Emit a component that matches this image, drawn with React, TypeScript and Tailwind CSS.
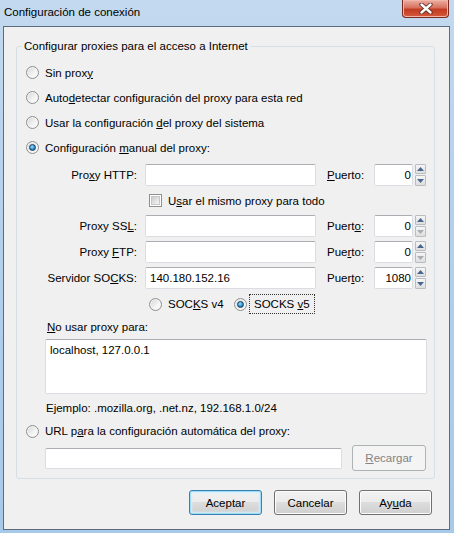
import React from "react";

const font = "font-['Liberation_Sans',Arial,sans-serif] text-[11.5px] leading-[16px] text-black";

const Radio = ({ checked }: { checked?: boolean }) => (
  <span className="flex h-[13px] w-[13px] shrink-0 items-center justify-center rounded-full border border-[#8e8f8f] bg-[linear-gradient(135deg,#d4d4d4,#f4f4f4_60%,#ffffff)] shadow-[inset_0_0_0_1px_#f4f4f4]">
    {checked && (
      <span className="h-[7px] w-[7px] rounded-full border border-[#1b3c5a] bg-[radial-gradient(circle_at_40%_35%,#9be3ff,#2c8fd0_55%,#0d4a7c)]" />
    )}
  </span>
);

const Check = () => (
  <span className="flex h-[13px] w-[13px] shrink-0 items-center justify-center border border-[#8e8f8f] bg-white">
    <span className="h-[9px] w-[9px] border border-[#c6c6c6] bg-[linear-gradient(135deg,#cbcbcb,#f6f6f6)]" />
  </span>
);

const Arrow = ({ up, off }: { up?: boolean; off?: boolean }) => (
  <svg width="7" height="4" viewBox="0 0 7 4">
    <path d={up ? "M0 4 L3.5 0 L7 4 Z" : "M0 0 L3.5 4 L7 0 Z"} fill={off ? "#a8acb3" : "#4a6592"} />
  </svg>
);

const Spin = ({ value, downOff }: { value: string; downOff?: boolean }) => (
  <div className="flex items-center">
    <div className="flex h-[22px] w-[39px] items-center justify-end rounded-[2px] border border-[#dadde2] border-t-[#abadb3] bg-white pr-[1px]">
      {value}
    </div>
    <div className="ml-[2px] flex h-[22px] w-[11px] flex-col gap-[1px]">
      <div className="flex h-[10px] items-center justify-center rounded-[1px] border border-[#b9bcc1] bg-[linear-gradient(#f6f6f6,#dedede)]">
        <Arrow up />
      </div>
      <div className="flex h-[11px] items-center justify-center rounded-[1px] border border-[#b9bcc1] bg-[linear-gradient(#f6f6f6,#dedede)]">
        <Arrow off={downOff} />
      </div>
    </div>
  </div>
);

const ProxyRow = ({
  label,
  port,
  value,
  portValue,
  downOff,
}: {
  label: React.ReactNode;
  port: React.ReactNode;
  value?: string;
  portValue: string;
  downOff?: boolean;
}) => (
  <div className="flex h-[26px] items-center">
    <span className="w-[120px] text-right">{label}</span>
    <div className="ml-[8px] flex h-[22px] w-[171px] items-center rounded-[2px] border border-[#dadde2] border-t-[#abadb3] bg-white pl-[4px]">
      {value}
    </div>
    <span className="ml-[11px] w-[47px]">{port}</span>
    <Spin value={portValue} downOff={downOff} />
  </div>
);

const Button = ({
  children,
  variant = "normal",
  className = "",
}: {
  children: React.ReactNode;
  variant?: "normal" | "default" | "disabled";
  className?: string;
}) => {
  const styles =
    variant === "default"
      ? "border-[#3c7fb1] bg-[linear-gradient(#f2f2f2_0%,#ebebeb_50%,#dddddd_50%,#cfcfcf_100%)] shadow-[inset_0_0_0_1px_#9fdcf7,inset_0_0_2px_2px_#d4effa]"
      : variant === "disabled"
        ? "border-[#adb2b5] bg-[#f4f4f4] text-[#838383]"
        : "border-[#707070] bg-[linear-gradient(#f2f2f2_0%,#ebebeb_50%,#dddddd_50%,#cfcfcf_100%)] shadow-[inset_0_0_0_1px_#fcfcfc]";
  return (
    <div className={`flex items-center justify-center rounded-[3px] border ${styles} ${className}`}>
      {children}
    </div>
  );
};

export default function App() {
  return (
    <div className={`flex h-[533px] w-[454px] flex-col bg-[linear-gradient(180deg,#c3d9ef_0%,#b4d0ec_40%,#a7c9ea_100%)] ${font}`}>
      {/* title bar */}
      <div className="flex h-[26px] shrink-0 items-start justify-between">
        <span className="pl-[4px] pt-[4px] text-[11.5px]">Configuración de conexión</span>
        <div className="mr-[5px] flex h-[18px] w-[47px] items-center justify-center rounded-b-[4px] border border-t-0 border-[#7a2a1e] bg-[linear-gradient(180deg,#eab0a4_0%,#d9705e_45%,#c23c22_55%,#d6593c_100%)] shadow-[inset_0_0_0_1px_#f0b6a8]">
          <svg width="14" height="11" viewBox="0 0 14 11">
            <path d="M2.5 1.5 L11.5 9.5 M11.5 1.5 L2.5 9.5" stroke="#5b2a22" strokeWidth="4.2" strokeLinecap="round" />
            <path d="M2.5 1.5 L11.5 9.5 M11.5 1.5 L2.5 9.5" stroke="#ffffff" strokeWidth="2.4" strokeLinecap="round" />
          </svg>
        </div>
      </div>

      {/* client area */}
      <div className="mb-[3px] ml-[3px] mr-[4px] flex flex-1 flex-col border border-[#5d6b7c] bg-[#f0f0f0]">
        <fieldset className="ml-[12px] mr-[14px] mt-[11px] rounded-[3px] border border-[#d5dfe5]">
          <legend className="ml-[5px] px-[2px] leading-[16px]">Configurar proxies para el acceso a Internet</legend>
          <div className="flex flex-col pb-[7px] pt-[6px]">
            <div className="flex h-[25px] items-center gap-[6px] pl-[9px]">
              <Radio />
              <span>
                Sin prox<u>y</u>
              </span>
            </div>
            <div className="flex h-[25px] items-center gap-[6px] pl-[9px]">
              <Radio />
              <span>
                Auto<u>d</u>etectar configuración del proxy para esta red
              </span>
            </div>
            <div className="flex h-[25px] items-center gap-[6px] pl-[9px]">
              <Radio />
              <span>
                Usar la configuración <u>d</u>el proxy del sistema
              </span>
            </div>
            <div className="flex h-[25px] items-center gap-[6px] pl-[9px]">
              <Radio checked />
              <span>
                Configuración <u>m</u>anual del proxy:
              </span>
            </div>

            <div className="mt-[2px]">
              <ProxyRow
                label={
                  <>
                    Pro<u>x</u>y HTTP:
                  </>
                }
                port={
                  <>
                    <u>P</u>uerto:
                  </>
                }
                portValue="0"
              />
            </div>
            <div className="flex h-[25px] items-center gap-[6px] pl-[132px]">
              <Check />
              <span>
                U<u>s</u>ar el mismo proxy para todo
              </span>
            </div>
            <ProxyRow
              label={
                <>
                  Proxy SS<u>L</u>:
                </>
              }
              port={
                <>
                  Puert<u>o</u>:
                </>
              }
              portValue="0"
              downOff
            />
            <ProxyRow
              label={
                <>
                  Proxy <u>F</u>TP:
                </>
              }
              port={
                <>
                  Pue<u>r</u>to:
                </>
              }
              portValue="0"
              downOff
            />
            <ProxyRow
              label={
                <>
                  Servidor SO<u>C</u>KS:
                </>
              }
              port={
                <>
                  Puer<u>t</u>o:
                </>
              }
              value="140.180.152.16"
              portValue="1080"
            />
            <div className="flex h-[26px] items-center pl-[132px]">
              <Radio />
              <span className="ml-[6px] w-[66px]">
                SOC<u>K</u>S v4
              </span>
              <Radio checked />
              <span className="ml-[2px] flex h-[20px] items-center border border-dotted border-[#333] px-[4px]">
                <span>
                  SOCKS <u>v</u>5
                </span>
              </span>
            </div>

            <div className="flex h-[20px] items-center pl-[30px]">
              <span>
                <u>N</u>o usar proxy para:
              </span>
            </div>
            <div className="ml-[28px] mt-[2px] h-[55px] w-[382px] rounded-[2px] border border-[#dadde2] border-t-[#abadb3] bg-white pl-[4px] pt-[2px]">
              localhost, 127.0.0.1
            </div>
            <div className="mt-[4px] flex h-[20px] items-center pl-[29px]">
              Ejemplo: .mozilla.org, .net.nz, 192.168.1.0/24
            </div>
            <div className="flex h-[26px] items-center gap-[6px] pl-[9px]">
              <Radio />
              <span>
                URL p<u>a</u>ra la configuración automática del proxy:
              </span>
            </div>
            <div className="ml-[28px] mt-[1px] flex h-[26px] items-center">
              <div className="h-[21px] w-[297px] rounded-[2px] border border-[#dadde2] border-t-[#abadb3] bg-white" />
              <Button variant="disabled" className="ml-[10px] h-[26px] w-[74px]">
                <span>
                  <u>R</u>ecargar
                </span>
              </Button>
            </div>
          </div>
        </fieldset>

        <div className="mt-[11px] flex justify-end gap-[12px] pr-[17px]">
          <Button variant="default" className="h-[25px] w-[73px]">
            Aceptar
          </Button>
          <Button className="h-[25px] w-[73px]">Cancelar</Button>
          <Button className="h-[25px] w-[73px]">
            <span>
              Ay<u>u</u>da
            </span>
          </Button>
        </div>
      </div>
    </div>
  );
}
